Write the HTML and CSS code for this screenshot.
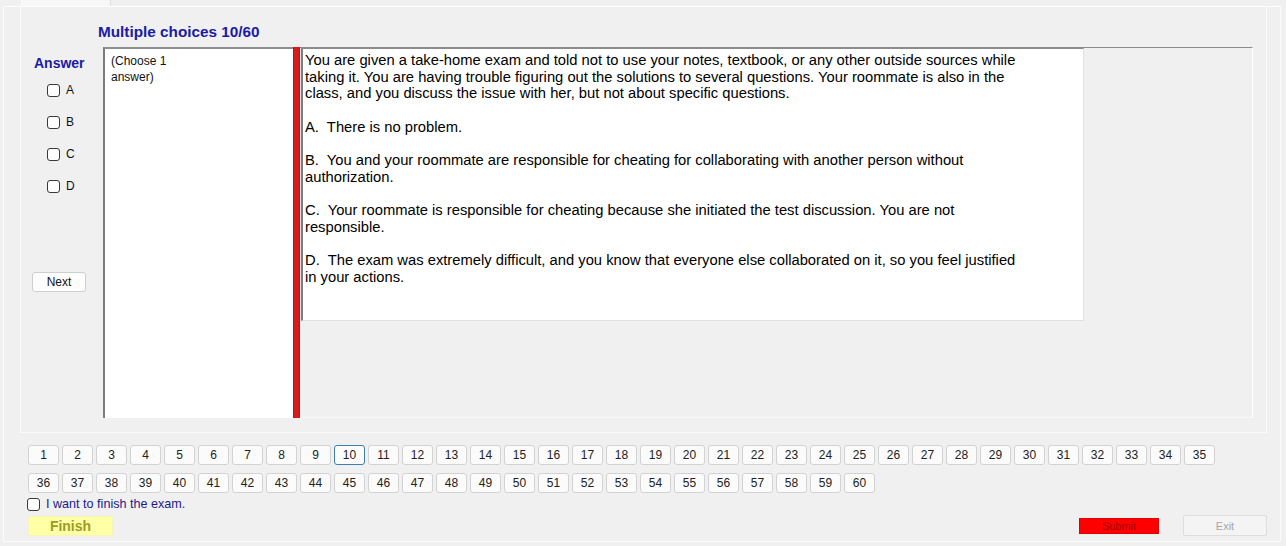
FILE: index.html
```html
<!DOCTYPE html>
<html>
<head>
<meta charset="utf-8">
<link rel="stylesheet" href="styles.css">
</head>
<body>
<div class="tabstrip"><div class="tab"></div></div>
<div class="page">
  <div class="group">
    <div class="title">Multiple choices 10/60</div>
    <div class="main">
      <div class="answer-col">
        <div class="answer-label">Answer</div>
        <label class="opt"><span class="box"></span><span>A</span></label>
        <label class="opt"><span class="box"></span><span>B</span></label>
        <label class="opt"><span class="box"></span><span>C</span></label>
        <label class="opt"><span class="box"></span><span>D</span></label>
        <div class="btn next">Next</div>
      </div>
      <div class="choose">(Choose 1<br>answer)</div>
      <div class="redbar"></div>
      <div class="qpanel">
        <div class="qbox">
          <p>You are given a take-home exam and told not to use your notes, textbook, or any other outside sources while<br>taking it. You are having trouble figuring out the solutions to several questions. Your roommate is also in the<br>class, and you discuss the issue with her, but not about specific questions.</p>
          <p>A.&nbsp; There is no problem.</p>
          <p>B.&nbsp; You and your roommate are responsible for cheating for collaborating with another person without<br>authorization.</p>
          <p>C.&nbsp; Your roommate is responsible for cheating because she initiated the test discussion. You are not<br>responsible.</p>
          <p>D.&nbsp; The exam was extremely difficult, and you know that everyone else collaborated on it, so you feel justified<br>in your actions.</p>
        </div>
      </div>
    </div>
  </div>
  <div class="nav">
    <div class="num">1</div><div class="num">2</div><div class="num">3</div><div class="num">4</div><div class="num">5</div><div class="num">6</div><div class="num">7</div><div class="num">8</div><div class="num">9</div><div class="num current">10</div><div class="num">11</div><div class="num">12</div><div class="num">13</div><div class="num">14</div><div class="num">15</div><div class="num">16</div><div class="num">17</div><div class="num">18</div><div class="num">19</div><div class="num">20</div><div class="num">21</div><div class="num">22</div><div class="num">23</div><div class="num">24</div><div class="num">25</div><div class="num">26</div><div class="num">27</div><div class="num">28</div><div class="num">29</div><div class="num">30</div><div class="num">31</div><div class="num">32</div><div class="num">33</div><div class="num">34</div><div class="num">35</div>
    <div class="num">36</div><div class="num">37</div><div class="num">38</div><div class="num">39</div><div class="num">40</div><div class="num">41</div><div class="num">42</div><div class="num">43</div><div class="num">44</div><div class="num">45</div><div class="num">46</div><div class="num">47</div><div class="num">48</div><div class="num">49</div><div class="num">50</div><div class="num">51</div><div class="num">52</div><div class="num">53</div><div class="num">54</div><div class="num">55</div><div class="num">56</div><div class="num">57</div><div class="num">58</div><div class="num">59</div><div class="num">60</div>
  </div>
  <label class="finish-check"><span class="box"></span><span>I want to finish the exam.</span></label>
  <div class="bottom">
    <div class="finish">Finish</div>
    <div class="spacer"></div>
    <div class="submit">Submit</div>
    <div class="exit">Exit</div>
  </div>
</div>
</body>
</html>
```

FILE: styles.css
```css
* { box-sizing: border-box; }
html, body { margin: 0; padding: 0; }
body {
  width: 1286px;
  height: 546px;
  background: #f0f0f0;
  font-family: "Liberation Sans", Arial, sans-serif;
  color: #000;
  overflow: hidden;
}
.tabstrip { height: 6px; }
.tab {
  margin-left: 21px;
  width: 90px;
  height: 6px;
  background: #f7f7f7;
  border-left: 1px solid #fdfdfd;
  border-right: 1px solid #dedede;
}
.page {
  margin-left: 3px;
  width: 1278px;
  height: 536px;
  border: 1px solid #fbfbfb;
  border-top-color: #fdfdfd;
}
.group {
  margin-left: 16px;
  width: 1247px;
  height: 426px;
  border: 1px solid #fafafa;
  border-top: none;
  padding-top: 16px;
}
.title {
  padding-left: 77px;
  font-weight: bold;
  font-size: 15.3px;
  line-height: 18px;
  height: 18px;
  color: #1a1aa6;
}
.main {
  margin-top: 6px;
  display: flex;
  height: 371px;
}
.answer-col {
  width: 82px;
  flex: none;
  padding-top: 8px;
}
.answer-label {
  padding-left: 13px;
  font-weight: bold;
  font-size: 14px;
  line-height: 16px;
  color: #1a1aa6;
  margin-bottom: 3px;
}
.opt {
  display: flex;
  align-items: center;
  height: 32px;
  padding-left: 26px;
  gap: 6px;
  font-size: 12px;
  color: #111;
}
.box {
  display: block;
  width: 13px;
  height: 13px;
  border: 1px solid #3a3a3a;
  border-radius: 3px;
  background: #fff;
  flex: none;
}
.btn {
  display: flex;
  align-items: center;
  justify-content: center;
  background: #fdfdfd;
  border: 1px solid #cfcfcf;
  border-radius: 3px;
  font-size: 12px;
  color: #111;
}
.next {
  margin-top: 70px;
  margin-left: 11px;
  width: 54px;
  height: 20px;
}
.choose {
  width: 190px;
  flex: none;
  background: #fff;
  border-left: 2px solid #7c7c7c;
  border-top: 2px solid #8e8e8e;
  padding: 4px 6px;
  font-size: 12px;
  line-height: 16px;
  color: #111;
}
.redbar {
  width: 7px;
  flex: none;
  background: #d61c1c;
  border-left: 1px solid #c01010;
  border-right: 1px solid #c01010;
}
.qpanel {
  width: 953px;
  flex: none;
  border-top: 1px solid #8c8c8c;
  border-right: 1px solid #ffffff;
  border-bottom: 1px solid #f8f8f8;
}
.qbox {
  margin-left: 1px;
  width: 783px;
  height: 273px;
  background: #fff;
  border-left: 2px solid #7c7c7c;
  border-top: 1px solid #8c8c8c;
  border-right: 1px solid #e0e0e0;
  border-bottom: 1px solid #e0e0e0;
  padding: 3px 2px 2px;
  font-size: 14.75px;
  line-height: 16.7px;
  white-space: nowrap;
}
.qbox p { margin: 0 0 16.7px 0; }
.nav {
  margin-top: 12px;
  margin-left: 24px;
  display: grid;
  grid-template-columns: repeat(35, 31px);
  grid-auto-rows: 20px;
  column-gap: 3px;
  row-gap: 8px;
}
.num {
  display: flex;
  align-items: center;
  justify-content: center;
  background: #fbfbfb;
  border: 1px solid #d2d2d2;
  border-radius: 3px;
  font-size: 12px;
  color: #222;
}
.num.current {
  border: 1px solid #3d7fb0;
  background: #fcfcfc;
}
.finish-check {
  margin-top: 3px;
  margin-left: 23px;
  display: flex;
  align-items: center;
  gap: 6px;
  height: 16px;
  font-size: 12.6px;
  color: #1a1a8c;
}
.bottom {
  margin-top: 3px;
  display: flex;
  align-items: center;
  height: 21px;
}
.finish {
  margin-left: 24px;
  width: 85px;
  height: 20px;
  background: #ffffa6;
  border: 1px solid #f4f4c0;
  display: flex;
  align-items: center;
  justify-content: center;
  font-weight: bold;
  font-size: 14px;
  color: #9c9c24;
}
.spacer { flex: 1; }
.submit {
  width: 80px;
  height: 16px;
  background: #ff0000;
  border: 1px solid #e00000;
  display: flex;
  align-items: center;
  justify-content: center;
  font-size: 11px;
  color: #a80000;
}
.exit {
  margin-left: 24px;
  margin-right: 13px;
  width: 84px;
  height: 21px;
  background: #f4f4f4;
  border: 1px solid #dddddd;
  border-radius: 2px;
  display: flex;
  align-items: center;
  justify-content: center;
  font-size: 11px;
  color: #a6a6a6;
}
```
